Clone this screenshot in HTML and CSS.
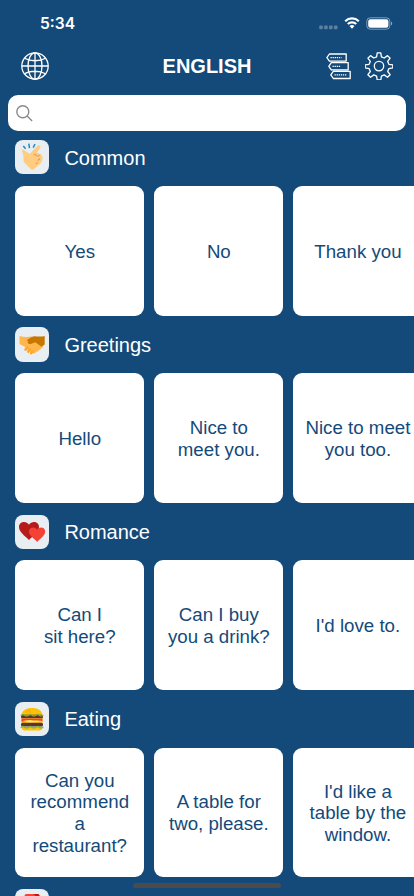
FILE: index.html
```html
<!DOCTYPE html>
<html lang="en">
  <head>
    <meta charset="UTF-8" />
    <meta name="viewport" content="width=device-width, initial-scale=1.0" />
    <title>Phrases</title>
    <link rel="stylesheet" href="styles.css">
  </head>
  <body>
    <div class="status-bar">
      <span class="time">5:34</span>
      <div class="status-icons">
        <svg class="signal" width="19" height="5" viewBox="0 0 19 5">
          <rect x="0.2" y="0.6" width="3.6" height="3.6" rx="1" />
          <rect x="5.1" y="0.6" width="3.6" height="3.6" rx="1" />
          <rect x="10" y="0.6" width="3.6" height="3.6" rx="1" />
          <rect x="14.9" y="0.6" width="3.6" height="3.6" rx="1" />
        </svg>
        <svg class="wifi" width="16" height="12" viewBox="0 0 16 12">
          <path d="M1.2 4.2a9.8 9.8 0 0 1 13.6 0M3.8 7a6 6 0 0 1 8.4 0" />
          <path class="dot" d="M5.5 9.1a3.6 3.6 0 0 1 5 0L8 11.8z" />
        </svg>
        <svg class="battery" width="27" height="13" viewBox="0 0 27 13">
          <rect class="outline" x="0.8" y="0.8" width="23" height="11.4" rx="3.4" />
          <rect x="2.2" y="2.2" width="20.2" height="8.6" rx="2.2" />
          <path class="tip" d="M25 4.4c1.6.7 1.6 3.5 0 4.2z" />
        </svg>
      </div>
    </div>

    <header class="nav-bar">
      <svg class="globe" width="28" height="28" viewBox="0 0 28 28">
        <circle cx="14" cy="14" r="13.2" />
        <ellipse cx="14" cy="14" rx="7" ry="13.2" />
        <path d="M14 .8v26.4M.8 14h26.4M3.6 6.2c5.5 3.4 15.3 3.4 20.8 0M3.6 21.8c5.5-3.4 15.3-3.4 20.8 0" />
      </svg>
      <h1>ENGLISH</h1>
      <div class="nav-actions">
        <svg class="books" width="26" height="27" viewBox="0 0 26 27">
          <path d="M20.2 1H3.4L.9 4.6l2.5 3.5h16.8zM22.2 9.7H5.3L2.8 13.3l2.5 3.5h16.9zM24.2 18.3H7.3l-2.5 3.6 2.5 3.6h16.9z" />
          <path class="dots" d="M4.5 4.6h11M6.5 13.3h8M8.5 21.9h12" />
        </svg>
        <svg class="gear" width="28" height="28" viewBox="0 0 28 28">
          <path d="M12.2.8h3.6l.6 4 2.8 1.2 3.3-2.4 2.6 2.6-2.4 3.2 1.2 2.9 3.9.6v3l-3.9.7-1.2 2.9 2.4 3.2-2.6 2.6-3.3-2.4-2.8 1.2-.6 3.9h-3.6l-.6-3.9-2.8-1.2-3.3 2.4-2.6-2.6 2.4-3.2-1.2-2.9-3.9-.7v-3l3.9-.6 1.2-2.9-2.4-3.2 2.6-2.6L8.8 6l2.8-1.2z" />
          <circle cx="14" cy="14.1" r="4.7" />
        </svg>
      </div>
    </header>

    <div class="search">
      <svg width="17" height="17" viewBox="0 0 17 17">
        <circle cx="6.8" cy="6.8" r="6" />
        <path d="M11.1 11.1l5 5" />
      </svg>
    </div>

    <main>
      <section class="category">
        <div class="category-title">
          <span class="icon">
            <svg width="34" height="34" viewBox="0 0 34 34">
              <path fill="#ffcc80" d="M7 11.3c-.7-1 .8-2 1.800-1.200l6 3.800 2.200-2.500 5.600-5.600c1.700-1.500 3.800.4 2.500 2.200l-3.400 5c2.700-.2 5.200 1.400 5.700 3.700.5 1.800-.2 3-.4 4.300-.4 2-2.100 3.100-3.800 4.400l-4.200 3.800c-.9.8-2.100.8-3 0l-6.500-6.400c-1.200-1.100-1-2.400-1-4.200 0-2.600-.2-4.700-1.500-7.300z" />
              <path class="knuckles" d="M19 14.300c1 .1 1.900.6 2.500 1.200M22.800 16.400l1.400-1.100M23 20.200l1.600-1.200M21 23.600l1.500-1" />
              <path class="snap" d="M8.300 6.100l2.300 2.600M13.800 3.700l.7 4.400M20 4l-1.800 3.600" />
            </svg>
          </span>
          <h2>Common</h2>
        </div>
        <div class="cards">
          <div class="card">Yes</div>
          <div class="card">No</div>
          <div class="card">Thank you</div>
        </div>
      </section>

      <section class="category">
        <div class="category-title">
          <span class="icon">
            <svg width="34" height="34" viewBox="0 0 34 34">
              <path fill="#ffb74d" d="M4.5 9c4 1.200 8 1 12 .6l11 9.300c.8 1-.1 2.400-1.500 2.200.3 1.300-.9 2.400-2.300 1.900 0 1.400-1.300 2.200-2.500 1.500-.4 1.500-2 2.500-3.400 1.700L9.300 19.500 4.500 17z" />
              <path class="fingers" d="M12.200 20.800l-1.700 1.800M14.800 22.600l-1.600 2M17.300 24.500l-1.100 1.600" />
              <path fill="#c77700" d="M29.700 9v8.500l-3.200 2.300-6.200-4.600c-2 .5-4 2.400-6.500 1.600-1.300-.4-1.600-1.500-.5-2.200l-1.500-1.400c2.500-1.500 4.600-4 7.400-4 3.400 0 6.700 1 10.500-.2z" />
            </svg>
          </span>
          <h2>Greetings</h2>
        </div>
        <div class="cards">
          <div class="card">Hello</div>
          <div class="card">Nice to<br />meet you.</div>
          <div class="card">Nice to meet<br />you too.</div>
        </div>
      </section>

      <section class="category">
        <div class="category-title">
          <span class="icon">
            <svg width="34" height="34" viewBox="0 0 34 34">
              <path fill="#b71c1c" d="M14 25C9.400 20.500 4 16.800 4 12c0-5.600 7.300-6.600 10-2.300C16.700 5.400 24 6.400 24 12c0 4.800-5.400 8.500-10 13z" />
              <path fill="#f44336" d="M22.200 27c-3.600-3.500-8.200-6.500-8.200-10.400 0-4.600 6-5.500 8.200-1.900 2.200-3.600 8-2.700 8 1.900 0 3.900-4.400 6.900-8 10.400z" />
            </svg>
          </span>
          <h2>Romance</h2>
        </div>
        <div class="cards">
          <div class="card">Can I<br />sit here?</div>
          <div class="card">Can I buy<br />you a drink?</div>
          <div class="card">I'd love to.</div>
        </div>
      </section>

      <section class="category">
        <div class="category-title">
          <span class="icon">
            <svg width="34" height="34" viewBox="0 0 34 34">
              <path fill="#ffc107" d="M6.500 13.200C7 8.500 11 6 17 6s10 2.500 10.600 7.200zM6.500 25h21c0 2-1 3.500-3 3.500h-15c-2 0-3-1.500-3-3.500z" />
              <path fill="#f59100" d="M11 9.500h1.400v1H11zM13 7.800h1.400v1H13zM14.300 9.500h1.200v1h-1.200z" />
              <rect x="6" y="12.700" width="22" height="3.800" rx="1.500" fill="#5d3426" />
              <path class="lettuce" d="M6.300 13.200q1.800-1.400 3.600 0t3.600 0 3.600 0 3.600 0 3.600 0 3.600 0" />
              <rect x="6.500" y="16.400" width="21" height="5" fill="#ffca28" />
              <path fill="#f44323" d="M6.500 16.500h21v2.800l-6-1-6 .5-9 1z" />
              <path fill="#ffe45c" d="M8 18.700l8 2.700 11-2.700-7 .2-5-1z" />
              <rect x="6" y="20.800" width="22" height="3.800" rx="1.500" fill="#5d3426" />
              <path class="lettuce" d="M6.300 25.200q1.800-1.400 3.600 0t3.600 0 3.600 0 3.600 0 3.600 0 3.600 0" />
            </svg>
          </span>
          <h2>Eating</h2>
        </div>
        <div class="cards">
          <div class="card">Can you<br />recommend<br />a<br />restaurant?</div>
          <div class="card">A table for<br />two, please.</div>
          <div class="card">I'd like a<br />table by the<br />window.</div>
        </div>
      </section>

      <section class="category">
        <div class="category-title">
          <span class="icon">
            <svg width="34" height="34" viewBox="0 0 34 34">
              <rect x="9.500" y="5" width="15" height="24" rx="2" fill="#f44336" />
              <path fill="#b71c1c" d="M18.500 5h4c1.200 0 2 .8 2 2v4z" />
            </svg>
          </span>
        </div>
      </section>
    </main>

    <div class="home-indicator"></div>
  </body>
</html>
```
FILE: styles.css
```css
* {
  box-sizing: border-box;
}

body {
  margin: 0;
  height: 896px;
  overflow: hidden;
  background-color: #144a79;
  color: white;
  font-family: "Liberation Sans", Arial, sans-serif;
}

svg {
  display: block;
}

h1, h2 {
  margin: 0;
}

.status-bar {
  height: 44px;
  padding: 2px 21px 0 40px;
  display: flex;
  align-items: center;
  justify-content: space-between;
}

.time {
  font-family: Inter, sans-serif;
  font-size: 15.6px;
  font-weight: 600;
}

.status-icons {
  display: flex;
  align-items: center;
  gap: 6px;
  fill: white;
}

.signal {
  opacity: 0.3;
  margin-top: 8px;
}

.wifi path {
  fill: none;
  stroke: white;
  stroke-width: 2.2;
}

.wifi .dot {
  fill: white;
  stroke: none;
}

.battery .outline {
  fill: none;
  stroke: white;
  opacity: 0.45;
}

.battery .tip {
  opacity: 0.5;
}

.nav-bar {
  height: 51px;
  padding: 0 21px 7px;
  display: grid;
  grid-template-columns: 1fr auto 1fr;
  align-items: center;
}

.nav-bar svg {
  fill: none;
  stroke: white;
  stroke-width: 1.3;
  stroke-linejoin: round;
}

.nav-bar h1 {
  font-size: 20px;
  line-height: 24px;
}

.nav-actions {
  display: flex;
  align-items: center;
  justify-content: flex-end;
  gap: 13px;
}

.books .dots {
  stroke-width: 1.2;
  stroke-dasharray: 1.3 0.8;
}

.search {
  height: 36px;
  margin: 0 8px;
  padding: 0 8px;
  display: flex;
  align-items: center;
  background-color: white;
  border-radius: 10px;
}

.search svg {
  fill: none;
  stroke: #8a8a8e;
  stroke-width: 1.4;
}

main {
  padding: 9.2px 0 0 15.2px;
}

.category {
  margin-bottom: 11.8px;
}

.category-title {
  display: flex;
  align-items: center;
  gap: 15px;
  margin-bottom: 11.7px;
}

.category-title h2 {
  padding-top: 1px;
  font-size: 20px;
  font-weight: 400;
  line-height: 24px;
}

.icon {
  width: 34.2px;
  height: 34.2px;
  background-color: #e9eef2;
  border-radius: 8px;
}

.knuckles, .snap, .fingers, .lettuce {
  fill: none;
  stroke-linecap: round;
}

.knuckles {
  stroke: #e09a5e;
  stroke-width: 1.1;
}

.snap {
  stroke: #1e88c9;
  stroke-width: 1.5;
  stroke-linecap: butt;
}

.fingers {
  stroke: #ffa726;
  stroke-width: 2.6;
}

.lettuce {
  stroke: #7cb342;
  stroke-width: 1.4;
}

.cards {
  display: flex;
  gap: 10px;
}

.card {
  flex: none;
  width: 129.1px;
  height: 129.5px;
  padding-top: 1.5px;
  display: flex;
  align-items: center;
  justify-content: center;
  text-align: center;
  background-color: white;
  border-radius: 9px;
  color: #144a79;
  font-size: 18.7px;
  line-height: 21.6px;
}

/* sits over the list, like the system bar */
.home-indicator {
  position: fixed;
  left: 133px;
  bottom: 8px;
  width: 148px;
  height: 5px;
  border-radius: 3px;
  background-color: #4b4b4b;
}
```
